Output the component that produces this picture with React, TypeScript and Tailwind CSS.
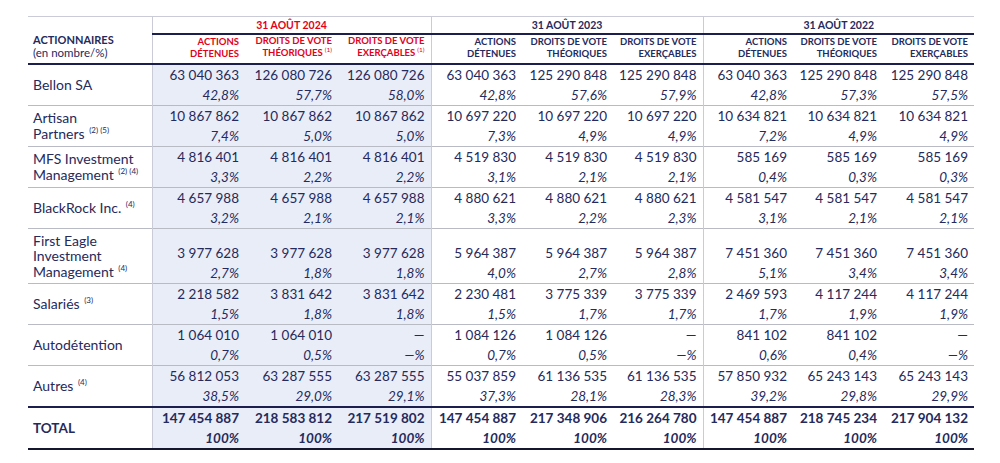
import React from 'react';

const navy = 'text-[#252a5c]';

type Cell = [string, string];

const rows: { label: React.ReactNode; cells: Cell[] }[] = [
  {
    label: <>Bellon SA</>,
    cells: [
      ['63 040 363', '42,8%'], ['126 080 726', '57,7%'], ['126 080 726', '58,0%'],
      ['63 040 363', '42,8%'], ['125 290 848', '57,6%'], ['125 290 848', '57,9%'],
      ['63 040 363', '42,8%'], ['125 290 848', '57,3%'], ['125 290 848', '57,5%'],
    ],
  },
  {
    label: <>Artisan<br />Partners <Note>(2) (5)</Note></>,
    cells: [
      ['10 867 862', '7,4%'], ['10 867 862', '5,0%'], ['10 867 862', '5,0%'],
      ['10 697 220', '7,3%'], ['10 697 220', '4,9%'], ['10 697 220', '4,9%'],
      ['10 634 821', '7,2%'], ['10 634 821', '4,9%'], ['10 634 821', '4,9%'],
    ],
  },
  {
    label: <>MFS Investment<br />Management <Note>(2) (4)</Note></>,
    cells: [
      ['4 816 401', '3,3%'], ['4 816 401', '2,2%'], ['4 816 401', '2,2%'],
      ['4 519 830', '3,1%'], ['4 519 830', '2,1%'], ['4 519 830', '2,1%'],
      ['585 169', '0,4%'], ['585 169', '0,3%'], ['585 169', '0,3%'],
    ],
  },
  {
    label: <>BlackRock Inc. <Note>(4)</Note></>,
    cells: [
      ['4 657 988', '3,2%'], ['4 657 988', '2,1%'], ['4 657 988', '2,1%'],
      ['4 880 621', '3,3%'], ['4 880 621', '2,2%'], ['4 880 621', '2,3%'],
      ['4 581 547', '3,1%'], ['4 581 547', '2,1%'], ['4 581 547', '2,1%'],
    ],
  },
  {
    label: <>First Eagle<br />Investment<br />Management <Note>(4)</Note></>,
    cells: [
      ['3 977 628', '2,7%'], ['3 977 628', '1,8%'], ['3 977 628', '1,8%'],
      ['5 964 387', '4,0%'], ['5 964 387', '2,7%'], ['5 964 387', '2,8%'],
      ['7 451 360', '5,1%'], ['7 451 360', '3,4%'], ['7 451 360', '3,4%'],
    ],
  },
  {
    label: <>Salariés <Note>(3)</Note></>,
    cells: [
      ['2 218 582', '1,5%'], ['3 831 642', '1,8%'], ['3 831 642', '1,8%'],
      ['2 230 481', '1,5%'], ['3 775 339', '1,7%'], ['3 775 339', '1,7%'],
      ['2 469 593', '1,7%'], ['4 117 244', '1,9%'], ['4 117 244', '1,9%'],
    ],
  },
  {
    label: <>Autodétention</>,
    cells: [
      ['1 064 010', '0,7%'], ['1 064 010', '0,5%'], ['—', '—%'],
      ['1 084 126', '0,7%'], ['1 084 126', '0,5%'], ['—', '—%'],
      ['841 102', '0,6%'], ['841 102', '0,4%'], ['—', '—%'],
    ],
  },
  {
    label: <>Autres <Note>(4)</Note></>,
    cells: [
      ['56 812 053', '38,5%'], ['63 287 555', '29,0%'], ['63 287 555', '29,1%'],
      ['55 037 859', '37,3%'], ['61 136 535', '28,1%'], ['61 136 535', '28,3%'],
      ['57 850 932', '39,2%'], ['65 243 143', '29,8%'], ['65 243 143', '29,9%'],
    ],
  },
];

const totals = [
  '147 454 887', '218 583 812', '217 519 802',
  '147 454 887', '217 348 906', '216 264 780',
  '147 454 887', '218 745 234', '217 904 132',
];

const widths = [124, 93, 93, 93, 91, 91, 90, 90, 90, 91];

function Note({ children }: { children: React.ReactNode }) {
  return <span className="text-[8px] leading-none relative -top-[6px] ml-[1px]">{children}</span>;
}

// column index -> cell decoration (group separators + 2024 shading)
function cellClass(i: number) {
  const sep = i === 0 || i === 3 || i === 6 ? 'border-l border-l-[#c9ccd6]' : '';
  const bg = i < 3 ? 'bg-[#e9edf7]' : '';
  return `${sep} ${bg}`;
}

const colHeads = [
  ['ACTIONS', 'DÉTENUES', false],
  ['DROITS DE VOTE', 'THÉORIQUES', true],
  ['DROITS DE VOTE', 'EXERÇABLES', true],
] as const;

export default function App() {
  return (
    <div className="w-[1000px] h-[463px] bg-white pt-[16px] pl-[28px]" style={{ fontFamily: 'Lato, "Noto Sans", sans-serif' }}>
      <table className={`border-collapse table-fixed w-[946px] ${navy}`}>
        <colgroup>
          {widths.map((w, i) => (
            <col key={i} style={{ width: w }} />
          ))}
        </colgroup>
        <thead>
          <tr className="border-t border-t-[#c9ccd6]">
            <th rowSpan={2} className="border-b-2 border-b-[#1c1f4d] align-bottom text-left pl-[5px] pb-[4px] font-normal">
              <div className="text-[11px] font-bold leading-[13px]">ACTIONNAIRES</div>
              <div className="text-[11.5px] leading-[13px]">(en nombre/%)</div>
            </th>
            {['31 AOÛT 2024', '31 AOÛT 2023', '31 AOÛT 2022'].map((d, g) => (
              <th
                key={d}
                colSpan={3}
                className={`h-[17px] border-l border-l-[#c9ccd6] border-b-2 border-b-[#1c1f4d] text-center text-[10.5px] font-bold leading-[13px] pt-[2px] ${g === 0 ? 'text-[#e2001a]' : ''}`}
              >
                {d}
              </th>
            ))}
          </tr>
          <tr className="border-b-2 border-b-[#1c1f4d]">
            {[0, 1, 2].map((g) =>
              colHeads.map(([a, b, note], j) => (
                <th
                  key={`${g}-${j}`}
                  className={`h-[30px] align-bottom text-right pr-[6px] pb-[2px] text-[9.5px] font-bold leading-[12.5px] whitespace-nowrap ${j === 0 ? 'border-l border-l-[#c9ccd6]' : ''} ${g === 0 ? 'text-[#e2001a]' : ''}`}
                >
                  <div>{a}</div>
                  <div>
                    {b}
                    {g === 0 && note && <span className="text-[6.5px] font-normal relative -top-[4px] ml-[2px]">(1)</span>}
                  </div>
                </th>
              )),
            )}
          </tr>
        </thead>
        <tbody>
          {rows.map((r, ri) => (
            <tr key={ri} className={ri === rows.length - 1 ? 'border-b-2 border-b-[#1c1f4d]' : 'border-b border-b-[#b9bbc4]'}>
              <td className="align-middle pl-[5px] py-[4px] text-[14px] leading-[15.5px] font-normal">{r.label}</td>
              {r.cells.map(([n, p], i) => (
                <td key={i} className={`align-bottom text-right pr-[6px] pt-0 pb-0 whitespace-nowrap ${cellClass(i)}`}>
                  <div className="text-[13.5px] leading-[20px]">{n}</div>
                  <div className="text-[13.5px] leading-[20px] italic">{p}</div>
                </td>
              ))}
            </tr>
          ))}
          <tr className="border-b-2 border-b-[#15172f]">
            <td className="align-middle pl-[5px] text-[13.5px] font-bold">TOTAL</td>
            {totals.map((n, i) => (
              <td key={i} className={`align-bottom text-right pr-[6px] pt-0 whitespace-nowrap ${cellClass(i)}`}>
                <div className="text-[13.5px] leading-[20px] font-bold">{n}</div>
                <div className="text-[13.5px] leading-[20px] italic font-bold">100%</div>
              </td>
            ))}
          </tr>
        </tbody>
      </table>
    </div>
  );
}
